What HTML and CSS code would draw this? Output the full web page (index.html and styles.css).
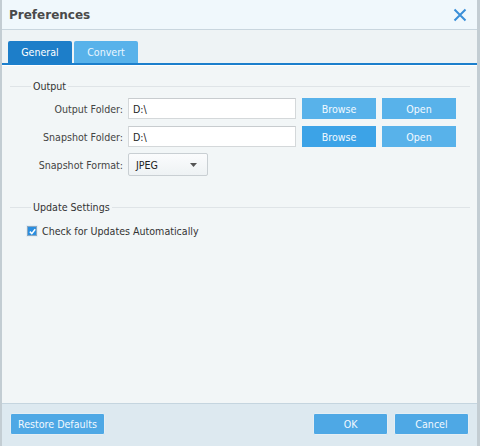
FILE: index.html
```html
<!DOCTYPE html>
<html>
<head>
<meta charset="utf-8">
<link rel="stylesheet" href="styles.css">
</head>
<body>
<div class="window">
  <div class="titlebar">
    <span class="title">Preferences</span>
    <svg class="close" width="14" height="14" viewBox="0 0 14 14"><path d="M1.5 1.5 L12.5 12.5 M12.5 1.5 L1.5 12.5" stroke="#3a8fd8" stroke-width="2" fill="none"/></svg>
  </div>
  <div class="tabs">
    <div class="tab active">General</div>
    <div class="tab">Convert</div>
  </div>
  <div class="content">
    <div class="group">
      <div class="legend"><span class="lline short"></span><span class="ltext">Output</span><span class="lline"></span></div>
      <div class="row first">
        <label class="lbl">Output Folder:</label>
        <div class="input">D:\</div>
        <div class="btn">Browse</div>
        <div class="btn">Open</div>
      </div>
      <div class="row">
        <label class="lbl">Snapshot Folder:</label>
        <div class="input">D:\</div>
        <div class="btn hover">Browse</div>
        <div class="btn">Open</div>
      </div>
      <div class="row">
        <label class="lbl">Snapshot Format:</label>
        <div class="select"><span>JPEG</span><svg width="7" height="4" viewBox="0 0 7 4"><path d="M0 0 H7 L3.5 4 Z" fill="#555"/></svg></div>
      </div>
    </div>
    <div class="group group2">
      <div class="legend"><span class="lline short"></span><span class="ltext">Update Settings</span><span class="lline"></span></div>
      <div class="check">
        <span class="box"><svg width="7" height="7" viewBox="0 0 7 7"><path d="M0.8 3.6 L2.8 5.6 L6.2 1.2" stroke="#fff" stroke-width="1.5" fill="none"/></svg></span>
        <span>Check for Updates Automatically</span>
      </div>
    </div>
  </div>
  <div class="footer">
    <div class="fbtn restore">Restore Defaults</div>
    <div class="spacer"></div>
    <div class="fbtn wide">OK</div>
    <div class="fbtn wide">Cancel</div>
  </div>
</div>
</body>
</html>
```
FILE: styles.css
```css
* { box-sizing: border-box; }
html, body { margin: 0; padding: 0; }
body {
  font-family: "DejaVu Sans Condensed", "DejaVu Sans", sans-serif;
  font-size: 10.6px;
  color: #333;
  background: #f2f6f7;
}
.window {
  width: 480px;
  height: 446px;
  display: flex;
  flex-direction: column;
  border-left: 2px solid #c3cdd3;
  border-right: 3px solid #c3cdd3;
  background: #f2f6f7;
}
.titlebar {
  height: 30px;
  background: #f0f8fc;
  border-bottom: 1px solid #c9d6de;
  display: flex;
  align-items: center;
  justify-content: space-between;
  padding: 0 10px 0 7px;
  flex: none;
}
.title {
  font-family: "DejaVu Sans", sans-serif;
  font-weight: bold;
  font-size: 12px;
  color: #4a4a4a;
}
.close { margin-top: 1px; }
.tabs {
  height: 35px;
  flex: none;
  display: flex;
  align-items: flex-end;
  gap: 2px;
  padding-left: 6px;
  background: #eef3f5;
  border-bottom: 2px solid #1c7fcc;
}
.tab {
  width: 64px;
  height: 22px;
  background: #58b2ea;
  color: #eaf6ff;
  display: flex;
  align-items: center;
  justify-content: center;
  border-radius: 2px 2px 0 0;
}
.tab.active { background: #1d7ec9; color: #fff; }
.content {
  flex: 1;
  padding: 13px 7px 0 8px;
  background: #f2f6f7;
  border-top: 1px solid #fff;
}
.legend {
  display: flex;
  align-items: center;
  height: 14px;
}
.lline { flex: 1; height: 1px; background: #dfe4e7; }
.lline.short { flex: none; width: 21px; }
.ltext { padding: 0 2px; color: #333; }
.row {
  display: flex;
  align-items: center;
  height: 21px;
  margin-top: 7px;
}
.row.first { margin-top: 5px; }
.lbl {
  width: 118px;
  text-align: right;
  padding-right: 5px;
  color: #444;
}
.input {
  width: 168px;
  height: 21px;
  border: 1px solid #d4d8da;
  border-top-color: #c8cccf;
  background: #fff;
  padding: 0 0 0 4px;
  display: flex;
  align-items: center;
  margin-right: 6px;
  color: #222;
}
.btn {
  width: 74px;
  height: 21px;
  background: #58b2ea;
  color: #f2f9ff;
  display: flex;
  align-items: center;
  justify-content: center;
  margin-right: 6px;
}
.btn.hover { background: #3ca3e7; }
.select {
  width: 80px;
  height: 23px;
  border: 1px solid #c9cfd3;
  background: linear-gradient(#fbfcfd, #eef2f4);
  display: flex;
  align-items: center;
  justify-content: space-between;
  padding: 0 10px 0 7px;
  color: #222;
  border-radius: 2px;
}
.group2 { margin-top: 25px; }
.check {
  display: flex;
  align-items: center;
  margin-top: 11px;
  padding-left: 17px;
  color: #333;
}
.box {
  width: 10px;
  height: 10px;
  border: 1px solid #8aa8c2;
  background: #2a8ee0;
  display: flex;
  align-items: center;
  justify-content: center;
  margin-right: 5px;
  box-shadow: 0 0 0 1px #e4eef5;
}
.footer {
  height: 43px;
  flex: none;
  background: #dde9f0;
  border-top: 1px solid #c5d5df;
  display: flex;
  align-items: center;
  padding: 0 8px 0 8px;
  gap: 6px;
}
.spacer { flex: 1; }
.fbtn {
  height: 22px;
  padding: 0 7px;
  margin-top: -2px;
  background: #4ea8e5;
  color: #f2f9ff;
  border: 1px solid #e4eef4;
  border-radius: 2px;
  display: flex;
  align-items: center;
  justify-content: center;
}
.fbtn.restore { width: 95px; }
.fbtn.wide { width: 75px; }
```
